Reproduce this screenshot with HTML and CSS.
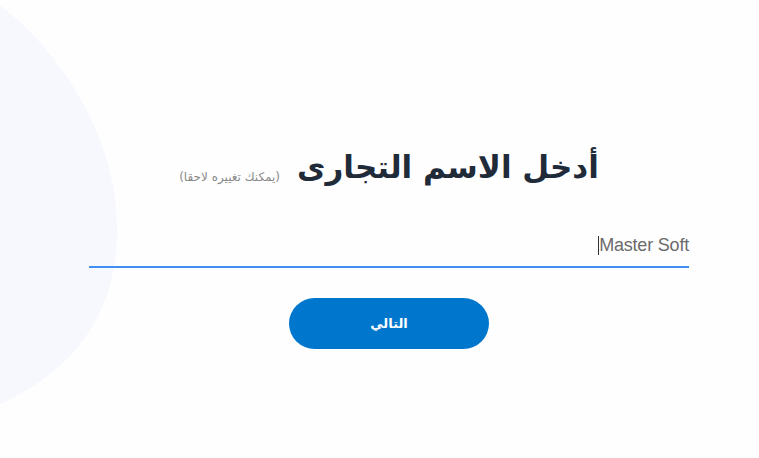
FILE: index.html
```html
<!DOCTYPE html>
<html lang="ar">
<head>
<meta charset="utf-8">
<title>أدخل الاسم التجارى</title>
<link rel="stylesheet" href="styles.css">
</head>
<body>
<svg class="blob" width="130" height="420" viewBox="0 0 130 420" aria-hidden="true">
  <path d="M0,6 C40,34 117,120 117,230 C117,318 70,372 0,404 Z" fill="#f6f8fe"/>
</svg>
<main class="page">
  <div class="title-row" dir="rtl">
    <h1 class="title">أدخل الاسم التجارى</h1>
    <span class="hint">(يمكنك تغييره لاحقا)</span>
  </div>
  <div class="field">
    <span class="caret"></span><span class="value">Master Soft</span>
  </div>
  <div class="actions">
    <button class="next" type="button">التالي</button>
  </div>
</main>
</body>
</html>
```
FILE: styles.css
```css
html, body {
  margin: 0;
  padding: 0;
  background: #fefeff;
  height: 100%;
  overflow: hidden;
}
body {
  position: relative;
  font-family: "DejaVu Sans", "Liberation Sans", sans-serif;
}
.blob {
  position: absolute;
  left: 0;
  top: 0;
  z-index: 0;
}
.page {
  position: relative;
  z-index: 1;
  width: 600px;
  margin-left: 89px;
  padding-top: 144px;
}
.title-row {
  display: flex;
  align-items: baseline;
  justify-content: center;
  gap: 17px;
}
.title {
  margin: 0;
  font-family: "DejaVu Sans", sans-serif;
  font-weight: bold;
  font-size: 31px;
  line-height: 46px;
  color: #1f2b38;
}
.hint {
  position: relative;
  top: 3px;
  font-family: "DejaVu Sans", sans-serif;
  font-size: 12px;
  color: #8a8a8a;
}
.field {
  margin-top: 38px;
  height: 34px;
  display: flex;
  justify-content: flex-end;
  align-items: center;
  border-bottom: 2px solid #3f8ef0;
  padding-bottom: 4px;
}
.caret {
  width: 1px;
  height: 19px;
  background: #333;
}
.value {
  font-family: "Liberation Sans", Arial, sans-serif;
  font-size: 18px;
  color: #6b6b6b;
  letter-spacing: -0.2px;
}
.actions {
  display: flex;
  justify-content: center;
  margin-top: 30px;
}
.next {
  width: 200px;
  height: 51px;
  border: none;
  border-radius: 26px;
  background: #0077cc;
  color: #fff;
  font-family: "DejaVu Sans", sans-serif;
  font-weight: bold;
  font-size: 13px;
  cursor: pointer;
}
```
